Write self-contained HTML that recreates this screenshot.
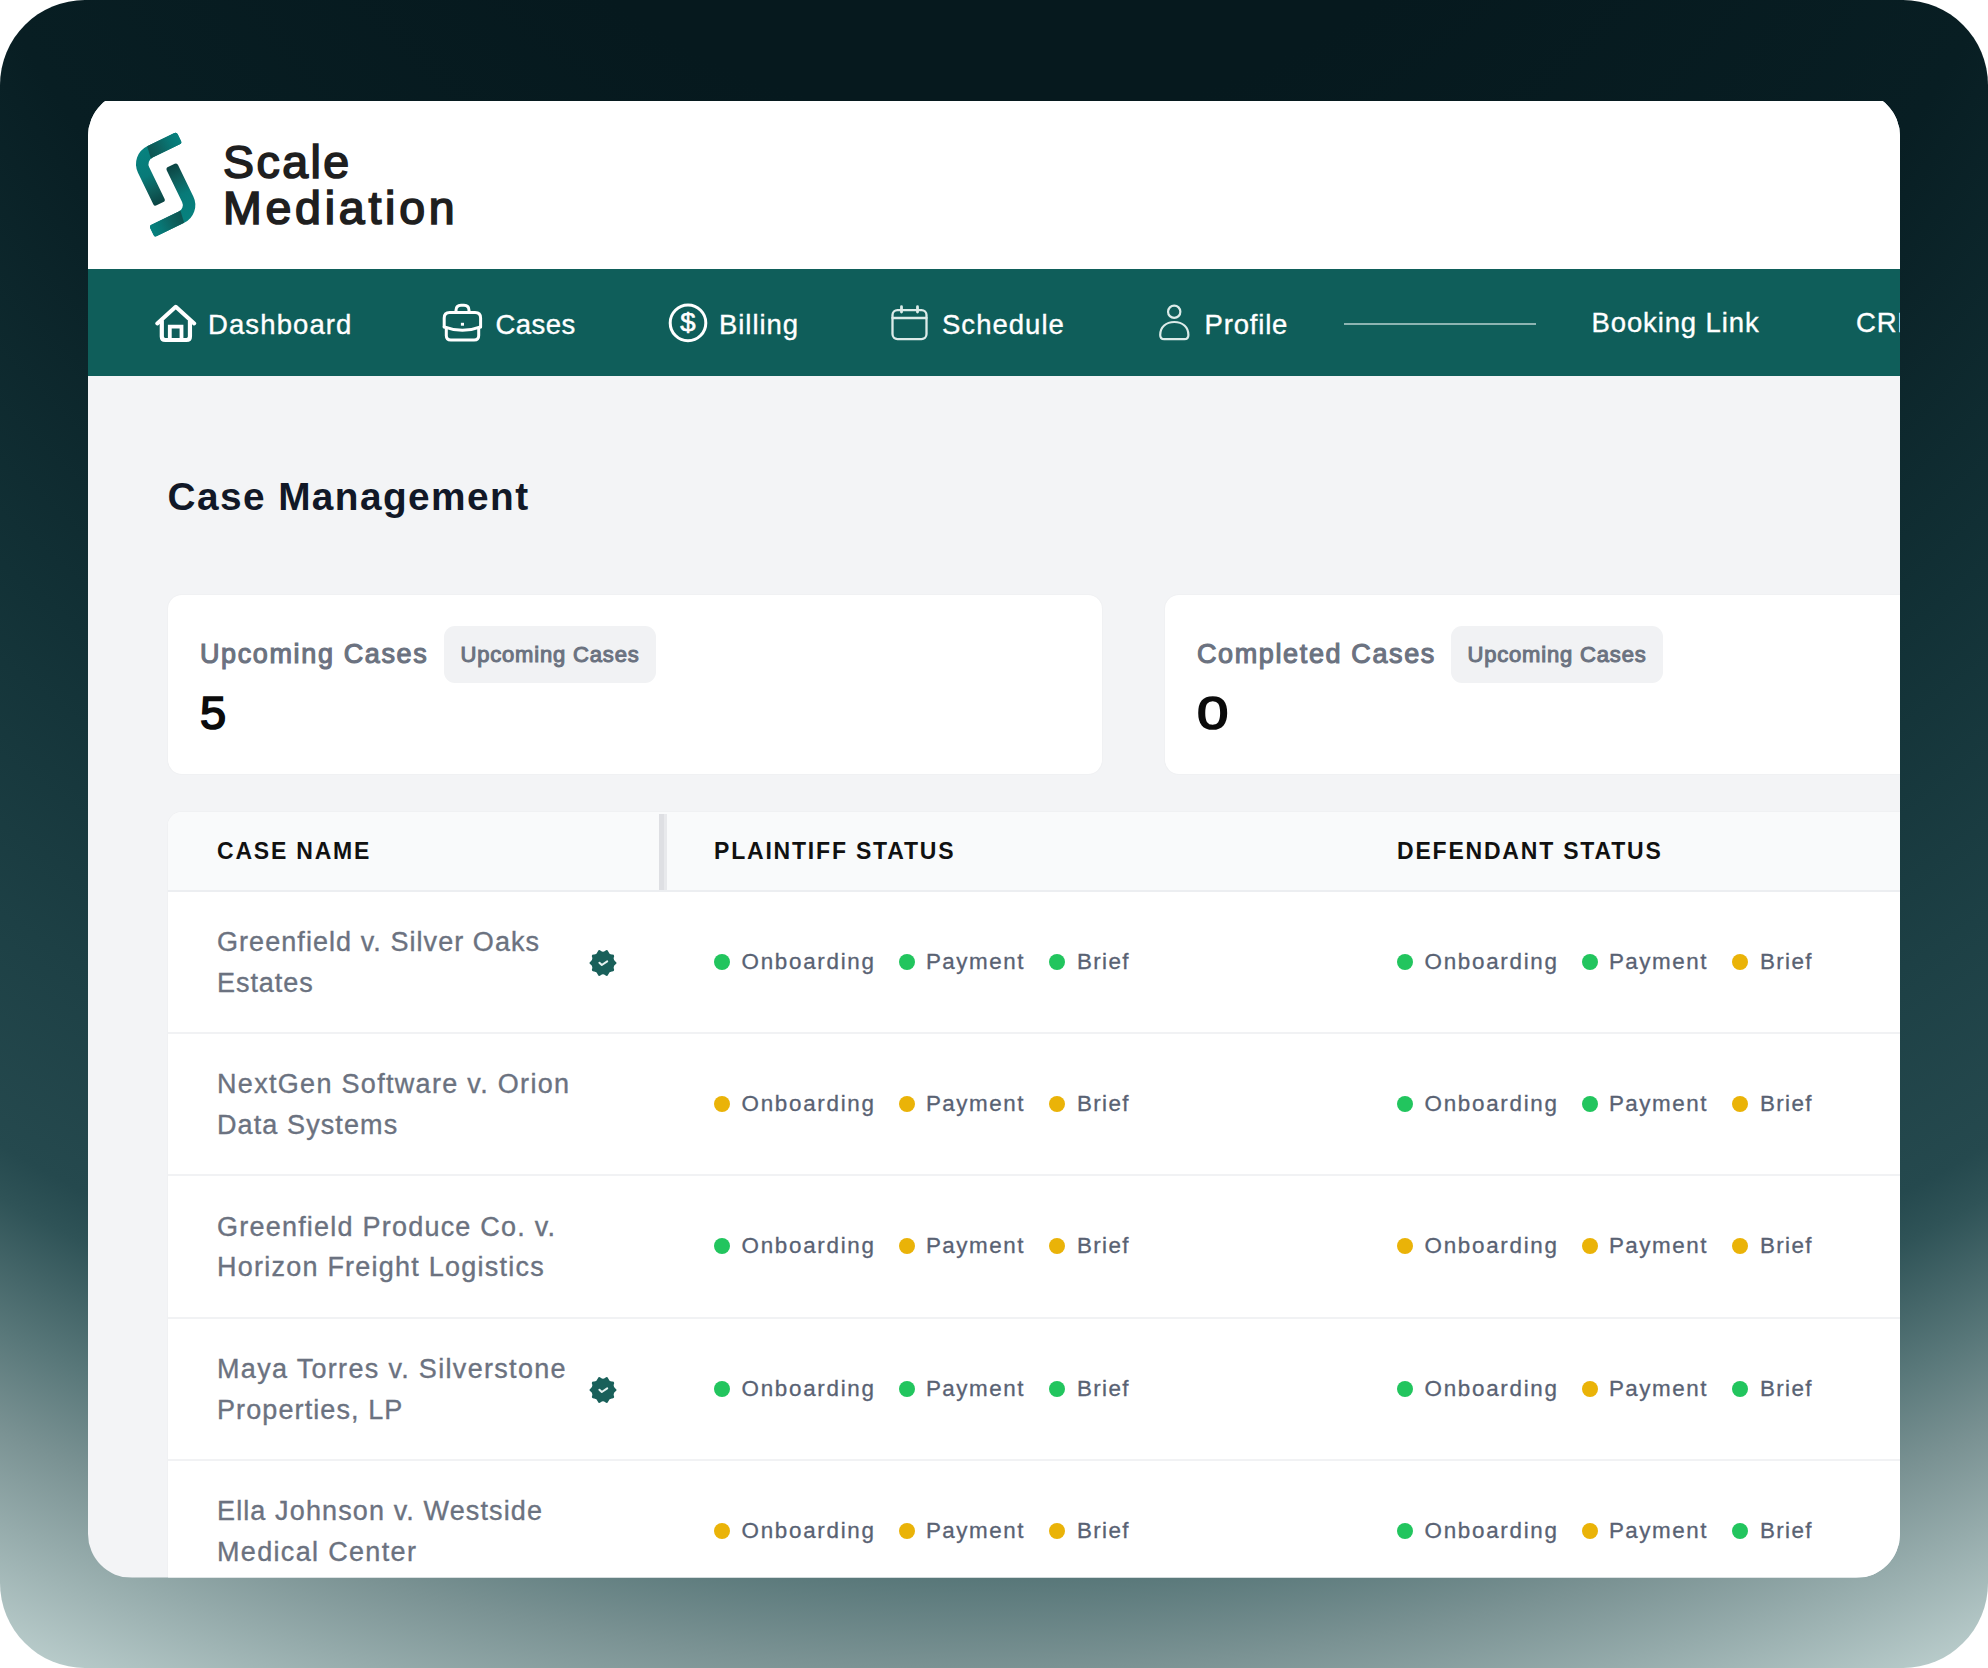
<!DOCTYPE html>
<html lang="en">
<head>
<meta charset="utf-8">
<title>Scale Mediation - Case Management</title>
<style>
*{box-sizing:border-box;margin:0;padding:0}
html,body{width:1988px;height:1668px;background:#fff;overflow:hidden}
body{font-family:"Liberation Sans",Arial,sans-serif;position:relative}
.frame{position:absolute;left:0;top:0;width:1988px;height:1668px;border-radius:85px;overflow:hidden;
background:radial-gradient(circle 2500px at 994px -527px,#06191e 0px,#06191e 650px,#081e23 1125px,#123136 1474px,#1d4045 1750px,#25494e 1945px,#2f5357 1990px,#587779 2105px,#7a9293 2195px,#bacdcc 2392px,#c8d8d7 2500px);
}
.app{position:absolute;left:88px;top:92px;width:1812px;height:1485.500px;background:#f3f4f6;border-radius:44px;overflow:hidden;clip-path:inset(9px 0 0 0)}
.inner{position:absolute;left:0;top:9px;width:100%;height:1476.500px}
.abs{position:absolute}
.top{position:absolute;left:0;top:0;width:100%;height:168px;background:#fff}
.brand{position:absolute;left:135px;top:37.600px;font-size:46.5px;line-height:46px;color:#1f1f1f;-webkit-text-stroke:1.7px #1f1f1f;white-space:nowrap}
.nav{position:absolute;left:0;top:168px;width:100%;height:107px;background:#0f5e5a}
.nav .it{position:absolute;top:0;height:107px;color:#fff;font-size:27.5px;line-height:107px;white-space:nowrap;letter-spacing:.55px;-webkit-text-stroke:.35px #fff}
.nav svg{position:absolute;fill:none;stroke:#fff;stroke-linecap:round;stroke-linejoin:round}
h1{position:absolute;left:79.500px;top:372px;font-size:38.8px;line-height:48px;font-weight:700;color:#111827;letter-spacing:1.42px;white-space:nowrap}
.card{position:absolute;top:493.800px;height:179.400px;background:#fff;border-radius:14px;box-shadow:0 0 2px rgba(17,24,39,.05)}
.card .lbl{position:absolute;left:32px;top:41.500px;font-size:27px;line-height:36px;color:#6b7280;-webkit-text-stroke:1.1px #6b7280;letter-spacing:1.62px;white-space:nowrap}
.card .pill{position:absolute;top:31px;height:57px;background:#f1f2f4;border-radius:11px;font-size:22px;line-height:58px;text-align:center;color:#6b7280;-webkit-text-stroke:1.05px #6b7280;letter-spacing:.83px;white-space:nowrap}
.card .num{position:absolute;left:32px;top:88px;font-size:47px;line-height:60px;color:#0b0b0b;-webkit-text-stroke:1.7px #0b0b0b}
.table{position:absolute;left:80px;top:711px;width:1760px;height:800px;background:#fff;border-radius:14px 0 0 0;overflow:hidden;box-shadow:0 0 2px rgba(17,24,39,.05)}
.thead{position:absolute;left:0;top:0;width:100%;height:79.500px;background:#f9fafb;border-bottom:2.500px solid #eceef1}
.th{position:absolute;top:0;height:77px;line-height:79px;font-size:23px;font-weight:700;color:#111;letter-spacing:1.8px;white-space:nowrap}
.vdiv{position:absolute;left:491px;top:2px;width:8px;height:76px;background:linear-gradient(90deg,#dedfe3 0,#dedfe3 5.500px,#e8e9ec 5.500px,#e8e9ec 100%)}
.row{position:absolute;left:0;width:100%;height:142.350px;border-bottom:2.500px solid #f1f2f4}
.row .name{position:absolute;left:49px;top:30.600px;font-size:27px;line-height:40.5px;color:#6b7280;letter-spacing:1.05px;white-space:nowrap;-webkit-text-stroke:.35px #6b7280}
.st{position:absolute;top:-.900px;height:142px;line-height:142px;font-size:22.400px;color:#596273;letter-spacing:.5px;white-space:nowrap;-webkit-text-stroke:.3px #596273}
.dot{position:absolute;top:62.100px;width:16px;height:16px;border-radius:50%}
.g{background:#22c55e}.y{background:#eab308}
.badge{position:absolute;left:421.300px;top:57.400px;width:28px;height:28px}
</style>
</head>
<body>
<div class="frame">
 <div class="app"><div class="inner">
  <div class="top">
   <svg class="abs" style="left:40px;top:24px" width="80" height="120" viewBox="128 125 80 120">
    <defs>
     <linearGradient id="g1" gradientUnits="userSpaceOnUse" x1="0" y1="-6" x2="0" y2="52"><stop offset="0" stop-color="#07827f"/><stop offset=".45" stop-color="#087a78"/><stop offset=".72" stop-color="#0f5f5c"/><stop offset="1" stop-color="#0a4241"/></linearGradient>
     <linearGradient id="g2" gradientUnits="userSpaceOnUse" x1="11" y1="0" x2="47" y2="0"><stop offset="0" stop-color="#0d5451"/><stop offset=".35" stop-color="#0e625f"/><stop offset=".7" stop-color="#087775"/><stop offset="1" stop-color="#07827f"/></linearGradient>
     <mask id="lm" maskUnits="userSpaceOnUse" x="-20" y="-20" width="90" height="90"><path d="M43.8 -3.75 L13.5 -3.75 A17.25 17.25 0 0 0 -3.75 13.5 L-3.75 48.5 L3.75 48.5 L3.75 13.5 A9.75 9.75 0 0 1 13.5 3.75 L43.8 3.75 Z" fill="#fff" stroke="#fff" stroke-width="5" stroke-linejoin="round"/></mask>
    </defs>
    <g transform="translate(137.7 157.8) rotate(-25.9)"><path d="M43.8 -3.75 L13.5 -3.75 A17.25 17.25 0 0 0 -3.75 13.5 L-3.75 48.5 L3.75 48.5 L3.75 13.5 A9.75 9.75 0 0 1 13.5 3.75 L43.8 3.75 Z" fill="url(#g1)" stroke="url(#g1)" stroke-width="5" stroke-linejoin="round"/><path d="M13.800 -8 L52 -8 L52 8 L11.300 8 Z" fill="url(#g2)" mask="url(#lm)"/></g>
    <g transform="rotate(180 165.65 184.55) translate(137.7 157.8) rotate(-25.9)"><path d="M43.8 -3.75 L13.5 -3.75 A17.25 17.25 0 0 0 -3.75 13.5 L-3.75 48.5 L3.75 48.5 L3.75 13.5 A9.75 9.75 0 0 1 13.5 3.75 L43.8 3.75 Z" fill="url(#g1)" stroke="url(#g1)" stroke-width="5" stroke-linejoin="round"/><path d="M13.800 -8 L52 -8 L52 8 L11.300 8 Z" fill="url(#g2)" mask="url(#lm)"/></g>
   </svg>
   <div class="brand"><span style="letter-spacing:2.45px">Scale</span><br><span style="letter-spacing:3.75px">Mediation</span></div>
  </div>
  <div class="nav">
   <svg style="left:65px;top:33px" width="44" height="42" viewBox="0 0 44 42" stroke-width="4"><path d="M4.300 21.400 L22.750 4.800 L41.200 21.400" stroke-width="4"/><path d="M8.800 19 V34.500 Q8.800 38 12.300 38 H33.450 Q36.950 38 36.950 34.500 V19" stroke-width="4.200"/><path d="M16.800 38 V24.700 H28.500 V38" stroke-width="3.800" stroke-linejoin="miter"/></svg>
   <div class="it" style="left:120px;top:2px;letter-spacing:1.11px">Dashboard</div>
   <svg style="left:353px;top:33px" width="42" height="40" viewBox="0 0 42 40" stroke-width="3"><path d="M3.200 25 V16 Q3.200 10.500 8.700 10.500 H34.100 Q39.600 10.500 39.600 16 V25"/><path d="M3.200 24.800 Q21.400 31.800 39.600 24.800"/><path d="M5.300 26 V33.500 Q5.300 38 9.800 38 H33.200 Q37.700 38 37.700 33.500 V26"/><path d="M15 10.500 V8.300 Q15 3.300 20 3.300 H23 Q28 3.300 28 8.300 V10.500"/><rect x="19.900" y="20.800" width="3.100" height="2.900" fill="#fff" stroke="none"/></svg>
   <div class="it" style="left:407.5px;top:2px;letter-spacing:0.48px">Cases</div>
   <svg style="left:578px;top:33px" width="44" height="42" viewBox="0 0 44 42" stroke-width="3"><circle cx="22" cy="20.900" r="17.800"/><text x="21.900" y="28.900" text-anchor="middle" font-family="Liberation Sans,Arial,sans-serif" font-size="25.500" fill="#fff" stroke="#fff" stroke-width=".6" transform="translate(21.9 0) scale(1.08 1) translate(-21.9 0)">$</text></svg>
   <div class="it" style="left:631px;top:2px;letter-spacing:0.95px">Billing</div>
   <svg style="left:801px;top:33px" width="42" height="40" viewBox="0 0 42 40" stroke-width="2.3"><g stroke="#dcebe9"><rect x="3.500" y="8.100" width="34" height="29" rx="5"/><path d="M3.500 16 H37.500"/><path d="M12.500 4.700 V10 M28.500 4.700 V10" stroke-width="2.800"/></g></svg>
   <div class="it" style="left:854px;top:2px;letter-spacing:1.02px">Schedule</div>
   <svg style="left:1068px;top:33px" width="36" height="40" viewBox="0 0 36 40" stroke-width="2.2"><g stroke="#dcebe9"><circle cx="18.200" cy="9.750" r="6.150"/><path d="M4.200 33 C4.200 25 10 20 18.300 20 C26.600 20 32.400 25 32.400 33 Q32.400 37.200 28.400 37.200 H8.200 Q4.200 37.200 4.200 33 Z"/></g></svg>
   <div class="it" style="left:1116.5px;top:2px;letter-spacing:0.82px">Profile</div>
   <div class="abs" style="left:1256px;top:53.5px;width:192px;height:2px;background:#8db4b2"></div>
   <div class="it" style="left:1503.5px;top:-0.5px;letter-spacing:0.88px">Booking Link</div>
   <div class="it" style="left:1768px;top:-0.5px;letter-spacing:0.8px">CRM</div>
  </div>
  <h1>Case Management</h1>
  <div class="card" style="left:80px;width:934px">
   <div class="lbl">Upcoming Cases</div><div class="pill" style="left:276px;width:212px">Upcoming Cases</div><div class="num">5</div>
  </div>
  <div class="card" style="left:1077px;width:800px">
   <div class="lbl">Completed Cases</div><div class="pill" style="left:286px;width:212px">Upcoming Cases</div><div class="num" style="transform:scaleX(1.2);transform-origin:0 50%">0</div>
  </div>
  <div class="table">
   <div class="thead"><div class="th" style="left:49px">CASE NAME</div><div class="vdiv"></div><div class="th" style="left:546px">PLAINTIFF STATUS</div><div class="th" style="left:1229px">DEFENDANT STATUS</div></div>
   <div class="row" style="top:79.50px"><div class="name"><span style="letter-spacing:1.06px">Greenfield v. Silver Oaks</span><br><span style="letter-spacing:0.95px">Estates</span></div><svg class="badge" viewBox="0 0 28 28"><path fill="#19605a" d="M26.34 12.38 Q28.70 14.00 26.34 15.62 Q23.99 17.24 24.94 19.94 Q25.89 22.64 23.03 22.57 Q20.17 22.49 19.36 25.24 Q18.54 27.98 16.27 26.24 Q14.00 24.50 11.73 26.24 Q9.46 27.98 8.64 25.24 Q7.83 22.49 4.97 22.57 Q2.11 22.64 3.06 19.94 Q4.01 17.24 1.66 15.62 Q-0.70 14.00 1.66 12.38 Q4.01 10.76 3.06 8.06 Q2.11 5.36 4.97 5.43 Q7.83 5.51 8.64 2.76 Q9.46 0.02 11.73 1.76 Q14.00 3.50 16.27 1.76 Q18.54 0.02 19.36 2.76 Q20.17 5.51 23.03 5.43 Q25.89 5.36 24.94 8.06 Q23.99 10.76 26.34 12.38Z"/><path d="M10.400 13.700 L12.800 16 L18.200 12.400" fill="none" stroke="#e6f2f0" stroke-width="2" stroke-linecap="round" stroke-linejoin="round"/></svg><i class="dot g" style="left:546.3px"></i><span class="st" style="left:573.6px;letter-spacing:1.7px">Onboarding</span><i class="dot g" style="left:730.5px"></i><span class="st" style="left:757.9px;letter-spacing:1.52px">Payment</span><i class="dot g" style="left:880.6px"></i><span class="st" style="left:908.9px;letter-spacing:1.38px">Brief</span><i class="dot g" style="left:1229.3px"></i><span class="st" style="left:1256.6px;letter-spacing:1.7px">Onboarding</span><i class="dot g" style="left:1413.5px"></i><span class="st" style="left:1440.9px;letter-spacing:1.52px">Payment</span><i class="dot y" style="left:1563.6px"></i><span class="st" style="left:1591.9px;letter-spacing:1.38px">Brief</span></div>
   <div class="row" style="top:221.85px"><div class="name"><span style="letter-spacing:1.31px">NextGen Software v. Orion</span><br><span style="letter-spacing:1.10px">Data Systems</span></div><i class="dot y" style="left:546.3px"></i><span class="st" style="left:573.6px;letter-spacing:1.7px">Onboarding</span><i class="dot y" style="left:730.5px"></i><span class="st" style="left:757.9px;letter-spacing:1.52px">Payment</span><i class="dot y" style="left:880.6px"></i><span class="st" style="left:908.9px;letter-spacing:1.38px">Brief</span><i class="dot g" style="left:1229.3px"></i><span class="st" style="left:1256.6px;letter-spacing:1.7px">Onboarding</span><i class="dot g" style="left:1413.5px"></i><span class="st" style="left:1440.9px;letter-spacing:1.52px">Payment</span><i class="dot y" style="left:1563.6px"></i><span class="st" style="left:1591.9px;letter-spacing:1.38px">Brief</span></div>
   <div class="row" style="top:364.20px"><div class="name"><span style="letter-spacing:1.22px">Greenfield Produce Co. v.</span><br><span style="letter-spacing:1.23px">Horizon Freight Logistics</span></div><i class="dot g" style="left:546.3px"></i><span class="st" style="left:573.6px;letter-spacing:1.7px">Onboarding</span><i class="dot y" style="left:730.5px"></i><span class="st" style="left:757.9px;letter-spacing:1.52px">Payment</span><i class="dot y" style="left:880.6px"></i><span class="st" style="left:908.9px;letter-spacing:1.38px">Brief</span><i class="dot y" style="left:1229.3px"></i><span class="st" style="left:1256.6px;letter-spacing:1.7px">Onboarding</span><i class="dot y" style="left:1413.5px"></i><span class="st" style="left:1440.9px;letter-spacing:1.52px">Payment</span><i class="dot y" style="left:1563.6px"></i><span class="st" style="left:1591.9px;letter-spacing:1.38px">Brief</span></div>
   <div class="row" style="top:506.55px"><div class="name"><span style="letter-spacing:1.32px">Maya Torres v. Silverstone</span><br><span style="letter-spacing:1.10px">Properties, LP</span></div><svg class="badge" viewBox="0 0 28 28"><path fill="#19605a" d="M26.34 12.38 Q28.70 14.00 26.34 15.62 Q23.99 17.24 24.94 19.94 Q25.89 22.64 23.03 22.57 Q20.17 22.49 19.36 25.24 Q18.54 27.98 16.27 26.24 Q14.00 24.50 11.73 26.24 Q9.46 27.98 8.64 25.24 Q7.83 22.49 4.97 22.57 Q2.11 22.64 3.06 19.94 Q4.01 17.24 1.66 15.62 Q-0.70 14.00 1.66 12.38 Q4.01 10.76 3.06 8.06 Q2.11 5.36 4.97 5.43 Q7.83 5.51 8.64 2.76 Q9.46 0.02 11.73 1.76 Q14.00 3.50 16.27 1.76 Q18.54 0.02 19.36 2.76 Q20.17 5.51 23.03 5.43 Q25.89 5.36 24.94 8.06 Q23.99 10.76 26.34 12.38Z"/><path d="M10.400 13.700 L12.800 16 L18.200 12.400" fill="none" stroke="#e6f2f0" stroke-width="2" stroke-linecap="round" stroke-linejoin="round"/></svg><i class="dot g" style="left:546.3px"></i><span class="st" style="left:573.6px;letter-spacing:1.7px">Onboarding</span><i class="dot g" style="left:730.5px"></i><span class="st" style="left:757.9px;letter-spacing:1.52px">Payment</span><i class="dot g" style="left:880.6px"></i><span class="st" style="left:908.9px;letter-spacing:1.38px">Brief</span><i class="dot g" style="left:1229.3px"></i><span class="st" style="left:1256.6px;letter-spacing:1.7px">Onboarding</span><i class="dot y" style="left:1413.5px"></i><span class="st" style="left:1440.9px;letter-spacing:1.52px">Payment</span><i class="dot g" style="left:1563.6px"></i><span class="st" style="left:1591.9px;letter-spacing:1.38px">Brief</span></div>
   <div class="row" style="top:648.90px"><div class="name"><span style="letter-spacing:1.12px">Ella Johnson v. Westside</span><br><span style="letter-spacing:1.33px">Medical Center</span></div><i class="dot y" style="left:546.3px"></i><span class="st" style="left:573.6px;letter-spacing:1.7px">Onboarding</span><i class="dot y" style="left:730.5px"></i><span class="st" style="left:757.9px;letter-spacing:1.52px">Payment</span><i class="dot y" style="left:880.6px"></i><span class="st" style="left:908.9px;letter-spacing:1.38px">Brief</span><i class="dot g" style="left:1229.3px"></i><span class="st" style="left:1256.6px;letter-spacing:1.7px">Onboarding</span><i class="dot y" style="left:1413.5px"></i><span class="st" style="left:1440.9px;letter-spacing:1.52px">Payment</span><i class="dot g" style="left:1563.6px"></i><span class="st" style="left:1591.9px;letter-spacing:1.38px">Brief</span></div>
  </div>
 </div></div>
</div>
</body>
</html>
